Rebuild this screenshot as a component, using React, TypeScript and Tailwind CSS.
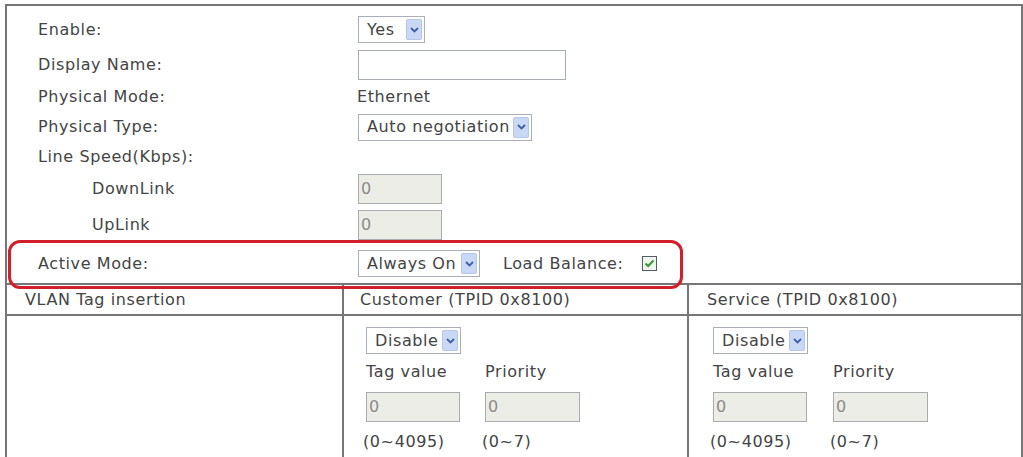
import type { ReactNode } from "react";

const Chevron = () => (
  <svg width="9" height="6" viewBox="0 0 9 6">
    <path d="M1 1 L4.5 4.5 L8 1" stroke="#3d5fa8" strokeWidth="1.8" fill="none" />
  </svg>
);

function Select({ label, width }: { label: string; width: string }) {
  return (
    <div className={`flex h-[27px] items-center justify-between border border-[#a9afb8] bg-white pl-[8px] pr-[2px] ${width}`}>
      <span>{label}</span>
      <span className="flex h-[21px] w-[16px] items-center justify-center rounded-[2px] border border-[#b5c6e6] bg-[#c9d8f4]">
        <Chevron />
      </span>
    </div>
  );
}

function Field({ width, value, disabled }: { width: string; value?: string; disabled?: boolean }) {
  return (
    <div
      className={`flex h-[30px] items-center border border-[#a7acb0] pl-[2px] text-[#8b8b8b] ${width} ${
        disabled ? "bg-[#ecede6]" : "bg-white"
      }`}
    >
      {value}
    </div>
  );
}

function Row({ h, label, sub, children }: { h: string; label: string; sub?: boolean; children?: ReactNode }) {
  return (
    <div className={`flex items-center ${h}`}>
      <div className={`w-[351px] shrink-0 ${sub ? "pl-[85px]" : "pl-[31px]"}`}>{label}</div>
      <div className="flex items-center">{children}</div>
    </div>
  );
}

function TagCell({ pad, col }: { pad: string; col: string }) {
  return (
    <div className={`pt-[11px] ${pad}`}>
      <Select label="Disable" width="w-[95px]" />
      <div className="flex h-[36px] items-center">
        <div className={col}>Tag value</div>
        <div>Priority</div>
      </div>
      <div className="mt-[2px] flex">
        <div className={col}>
          <Field width="w-[94px]" value="0" disabled />
        </div>
        <Field width="w-[95px]" value="0" disabled />
      </div>
      <div className="flex h-[40px] items-center">
        <div className={`${col} -ml-[3px] pr-[3px]`}>(0~4095)</div>
        <div>(0~7)</div>
      </div>
    </div>
  );
}

export default function App() {
  return (
    <div className="h-[457px] overflow-hidden bg-white pl-[5px] pt-[4px] font-['DejaVu_Sans',sans-serif] text-[16px] tracking-[0.6px] text-[#444]">
      <div className="w-[1018px] border-2 border-b-0 border-[#767676]">
        <div className="pt-[5px]">
          <Row h="h-[37px]" label="Enable:">
            <Select label="Yes" width="w-[67px]" />
          </Row>
          <Row h="h-[34px]" label="Display Name:">
            <Field width="w-[208px]" />
          </Row>
          <Row h="h-[30px]" label="Physical Mode:">
            <span className="-ml-[1px]">Ethernet</span>
          </Row>
          <Row h="h-[30px]" label="Physical Type:">
            <Select label="Auto negotiation" width="w-[174px]" />
          </Row>
          <Row h="h-[30px]" label="Line Speed(Kbps):" />
          <Row h="h-[34px]" label="DownLink" sub>
            <Field width="w-[84px]" value="0" disabled />
          </Row>
          <Row h="h-[38px]" label="UpLink" sub>
            <Field width="w-[84px]" value="0" disabled />
          </Row>
          <div className="relative">
            <Row h="h-[39px]" label="Active Mode:">
              <Select label="Always On" width="w-[122px]" />
              <span className="ml-[23px]">Load Balance:</span>
              <span className="ml-[19px] flex h-[15px] w-[15px] items-center justify-center border border-[#4f5d6b] bg-[#f1f5ef]">
                <svg width="11" height="9" viewBox="0 0 11 9">
                  <path d="M1.5 4.5 L4.2 7 L9.5 1.5" stroke="#2f9a32" strokeWidth="2" fill="none" />
                </svg>
              </span>
            </Row>
            <div className="absolute left-[1px] top-[-4px] z-10 h-[49px] w-[675px] rounded-[12px] border-[3px] border-[#d11f2b]" />
          </div>
        </div>
        <div className="grid grid-cols-[337px_345px_1fr] border-t-2 border-[#767676]">
          <div className="flex h-[31px] items-center border-b-2 border-r-2 border-[#767676] pl-[18px]">VLAN Tag insertion</div>
          <div className="flex h-[31px] items-center border-b-2 border-r-2 border-[#767676] pl-[16px]">Customer (TPID 0x8100)</div>
          <div className="flex h-[31px] items-center border-b-2 border-[#767676] pl-[18px]">Service (TPID 0x8100)</div>
          <div className="h-[150px] border-r-2 border-[#767676]" />
          <div className="h-[150px] border-r-2 border-[#767676]">
            <TagCell pad="pl-[22px]" col="w-[119px]" />
          </div>
          <div className="h-[150px]">
            <TagCell pad="pl-[24px]" col="w-[120px]" />
          </div>
        </div>
      </div>
    </div>
  );
}
